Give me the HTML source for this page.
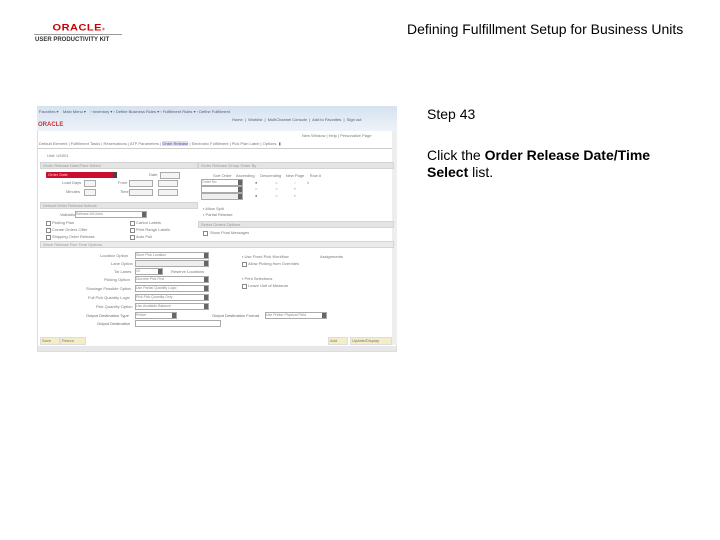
<!DOCTYPE html>
<html><head><style>
body{margin:0;width:720px;height:540px;background:#fff;position:relative;font-family:"Liberation Sans",sans-serif;overflow:hidden}
.a{position:absolute}
.t{position:absolute;font-size:4px;color:#777;white-space:nowrap;line-height:5px}
.sec{position:absolute;background:#e4e4e4;border:1px solid #d4d4d4;height:5px;font-size:4px;color:#999;line-height:5px;padding-left:2px}
.dd{position:absolute;height:5px;border:1px solid #aaa;background:#fff;font-size:3.5px;color:#888;line-height:5px}
.dd:after{content:"";position:absolute;right:0;top:0;width:4px;height:5px;background:#666}
.bx{position:absolute;height:5px;border:1px solid #aaa;background:#f4f4f4}
.cb{position:absolute;width:3px;height:3px;border:1px solid #888;background:#fff}
</style></head><body>
<div class="a" style="left:37px;top:22px;width:84px;text-align:center;font-weight:bold;font-size:11px;color:#c00;letter-spacing:0.5px;line-height:12px;transform:scaleY(0.85)">ORACLE<span style="font-size:4px">®</span></div>
<div class="a" style="left:34px;top:34px;width:88px;height:1px;background:#999"></div>
<div class="a" style="left:35px;top:37px;font-size:6px;font-weight:bold;color:#333;line-height:7px;white-space:nowrap">USER PRODUCTIVITY KIT</div>
<div class="a" style="left:407px;top:21px;font-size:14px;color:#000;white-space:nowrap">Defining Fulfillment Setup for Business Units</div>
<div class="a" style="left:427px;top:106px;font-size:14px;color:#000">Step 43</div>
<div class="a" style="left:427px;top:147px;font-size:14px;color:#000;line-height:17px;width:260px">Click the <b>Order Release Date/Time Select</b> list.</div>

<div class="a" style="left:37px;top:106px;width:360px;height:246px;border:1px solid #ddd;box-sizing:border-box;background:#fff"></div>
<div class="a" style="left:37px;top:106px;width:360px;height:25px;background:linear-gradient(#d6e2f0,#eef3f9)"></div>
<div class="t" style="left:39px;top:109px;color:#557">Favorites ▾ &nbsp;&nbsp; Main Menu ▾ &nbsp;&nbsp; › Inventory ▾ › Define Business Rules ▾ › Fulfillment Rules ▾ › Define Fulfillment</div>
<div class="t" style="left:232px;top:117px;color:#557">Home &nbsp;|&nbsp; Worklist &nbsp;|&nbsp; MultiChannel Console &nbsp;|&nbsp; Add to Favorites &nbsp;|&nbsp; Sign out</div>
<div class="a" style="left:38px;top:122px;font-size:6px;font-weight:bold;color:#c33;line-height:7px">ORACLE</div>
<div class="t" style="left:302px;top:133px">New Window | Help | Personalize Page</div>
<div class="a" style="left:392px;top:131px;width:5px;height:214px;background:#eee"></div>
<div class="t" style="left:39px;top:141px">Default Element | Fulfillment Tasks | Reservations | ATP Parameters | <span style="background:#dde;color:#55a">Order Release</span> | Electronic Fulfillment | Pick Plan Label | Options &nbsp;▮</div>
<div class="a" style="left:38px;top:148px;width:354px;height:1px;background:#ccc"></div>
<div class="t" style="left:47px;top:153px">Unit: US001</div>

<div class="sec" style="left:40px;top:162px;width:154px">Order Release Date/Time Select</div>
<div class="sec" style="left:198px;top:162px;width:192px">Order Release Group Order By</div>
<div class="a" style="left:46px;top:172px;width:68px;height:6px;background:#c8102e;border-radius:1px"></div>
<div class="a" style="left:113px;top:172px;width:4px;height:6px;background:#444"></div>
<div class="t" style="left:48px;top:172px;color:#fcc">Order Date</div>
<div class="t" style="left:149px;top:172px">Date</div><div class="bx" style="left:160px;top:172px;width:18px"></div>
<div class="t" style="left:62px;top:180px">Load Days</div><div class="bx" style="left:84px;top:180px;width:10px"></div>
<div class="t" style="left:118px;top:180px">From</div><div class="bx" style="left:129px;top:180px;width:22px"></div><div class="bx" style="left:158px;top:180px;width:18px"></div>
<div class="t" style="left:66px;top:189px">Minutes</div><div class="bx" style="left:84px;top:189px;width:10px"></div>
<div class="t" style="left:120px;top:189px">Time</div><div class="bx" style="left:129px;top:189px;width:22px"></div><div class="bx" style="left:158px;top:189px;width:18px"></div>

<div class="t" style="left:213px;top:173px">Sort Order &nbsp;&nbsp; Ascending &nbsp;&nbsp;&nbsp; Descending &nbsp;&nbsp; New Page &nbsp;&nbsp;&nbsp; Row #</div>
<div class="dd" style="left:201px;top:179px;width:40px">Order No</div>
<div class="dd" style="left:201px;top:186px;width:40px"></div>
<div class="dd" style="left:201px;top:193px;width:40px;background:#eee"></div>
<div class="t" style="left:255px;top:180px">●&nbsp;&nbsp;&nbsp;&nbsp;&nbsp;&nbsp;&nbsp;&nbsp;&nbsp;&nbsp;&nbsp;&nbsp;&nbsp;&nbsp;&nbsp;&nbsp;○&nbsp;&nbsp;&nbsp;&nbsp;&nbsp;&nbsp;&nbsp;&nbsp;&nbsp;&nbsp;&nbsp;&nbsp;&nbsp;&nbsp;&nbsp;▫&nbsp;&nbsp;&nbsp;&nbsp;&nbsp;&nbsp;&nbsp;&nbsp;&nbsp;&nbsp;1</div>
<div class="t" style="left:255px;top:186px">○&nbsp;&nbsp;&nbsp;&nbsp;&nbsp;&nbsp;&nbsp;&nbsp;&nbsp;&nbsp;&nbsp;&nbsp;&nbsp;&nbsp;&nbsp;&nbsp;○&nbsp;&nbsp;&nbsp;&nbsp;&nbsp;&nbsp;&nbsp;&nbsp;&nbsp;&nbsp;&nbsp;&nbsp;&nbsp;&nbsp;&nbsp;▪</div>
<div class="t" style="left:255px;top:193px">●&nbsp;&nbsp;&nbsp;&nbsp;&nbsp;&nbsp;&nbsp;&nbsp;&nbsp;&nbsp;&nbsp;&nbsp;&nbsp;&nbsp;&nbsp;&nbsp;○&nbsp;&nbsp;&nbsp;&nbsp;&nbsp;&nbsp;&nbsp;&nbsp;&nbsp;&nbsp;&nbsp;&nbsp;&nbsp;&nbsp;&nbsp;▪</div>
<div class="t" style="left:203px;top:206px">▪ Allow Split</div>
<div class="t" style="left:203px;top:212px">▪ Partial Release</div>
<div class="sec" style="left:198px;top:221px;width:192px">Select Orders Options</div>
<div class="cb" style="left:203px;top:231px"></div><div class="t" style="left:210px;top:230px">Show Final Messages</div>

<div class="sec" style="left:40px;top:202px;width:154px">Default Order Release Actions</div>
<div class="t" style="left:60px;top:212px">Validation</div><div class="dd" style="left:75px;top:211px;width:70px">Release All Lines</div>
<div class="cb" style="left:46px;top:221px"></div><div class="t" style="left:52px;top:220px">Picking Plan</div>
<div class="cb" style="left:130px;top:221px"></div><div class="t" style="left:136px;top:220px">Carton Labels</div>
<div class="cb" style="left:46px;top:228px"></div><div class="t" style="left:52px;top:227px">Create Orders Offer</div>
<div class="cb" style="left:130px;top:228px"></div><div class="t" style="left:136px;top:227px">Print Range Labels</div>
<div class="cb" style="left:46px;top:235px"></div><div class="t" style="left:52px;top:234px">Shipping Order Release</div>
<div class="cb" style="left:130px;top:235px"></div><div class="t" style="left:136px;top:234px">Auto Pull</div>

<div class="sec" style="left:40px;top:241px;width:350px;background:#ebebeb">Wave Release Run Time Options</div>
<div class="t" style="left:100px;top:253px">Location Option</div><div class="dd" style="left:135px;top:252px;width:72px">Store Pick Location</div>
<div class="t" style="left:111px;top:261px">Lane Option</div><div class="dd" style="left:135px;top:260px;width:72px;background:#eee"></div>
<div class="t" style="left:114px;top:269px">Tot Lanes</div><div class="dd" style="left:135px;top:268px;width:26px">10</div><div class="t" style="left:171px;top:269px">Reserve Locations</div>
<div class="t" style="left:104px;top:277px">Picking Option</div><div class="dd" style="left:135px;top:276px;width:72px">Discrete Pick First</div>
<div class="t" style="left:86px;top:286px">Shortage Possible Option</div><div class="dd" style="left:135px;top:285px;width:72px">Use Partial Quantity Logic</div>
<div class="t" style="left:88px;top:295px">Full Pick Quantity Logic</div><div class="dd" style="left:135px;top:294px;width:72px">Pick Pick Quantity Only</div>
<div class="t" style="left:96px;top:304px">Pick Quantity Option</div><div class="dd" style="left:135px;top:303px;width:72px">Use Available Balance</div>
<div class="t" style="left:86px;top:313px;color:#666">Output Destination Type</div><div class="dd" style="left:135px;top:312px;width:40px">Printer</div>
<div class="t" style="left:212px;top:313px;color:#666">Output Destination Format</div><div class="dd" style="left:265px;top:312px;width:60px">Use Printer Physical Field</div>
<div class="t" style="left:97px;top:321px;color:#666">Output Destination</div><div class="bx" style="left:135px;top:320px;width:84px;background:#fff"></div>
<div class="t" style="left:242px;top:254px">▪ Use Fixed Pick Workflow</div><div class="t" style="left:320px;top:254px">Assignments</div>
<div class="cb" style="left:242px;top:262px"></div><div class="t" style="left:248px;top:261px">Allow Picking from Overrides</div>
<div class="t" style="left:242px;top:276px">▪ Print Selections</div>
<div class="cb" style="left:242px;top:284px"></div><div class="t" style="left:248px;top:283px">Leave Unit of Measure</div>

<div class="a" style="left:40px;top:337px;width:18px;height:6px;background:#f3edc8;border:1px solid #ddd"></div><div class="t" style="left:42px;top:338px">Save</div>
<div class="a" style="left:60px;top:337px;width:24px;height:6px;background:#f3edc8;border:1px solid #ddd"></div><div class="t" style="left:62px;top:338px">Return</div>
<div class="a" style="left:328px;top:337px;width:18px;height:6px;background:#f3edc8;border:1px solid #ddd"></div><div class="t" style="left:330px;top:338px">Add</div>
<div class="a" style="left:350px;top:337px;width:40px;height:6px;background:#f3edc8;border:1px solid #ddd"></div><div class="t" style="left:352px;top:338px">Update/Display</div>
<div class="a" style="left:38px;top:346px;width:358px;height:5px;background:#e8e8e8"></div>
</body></html>
